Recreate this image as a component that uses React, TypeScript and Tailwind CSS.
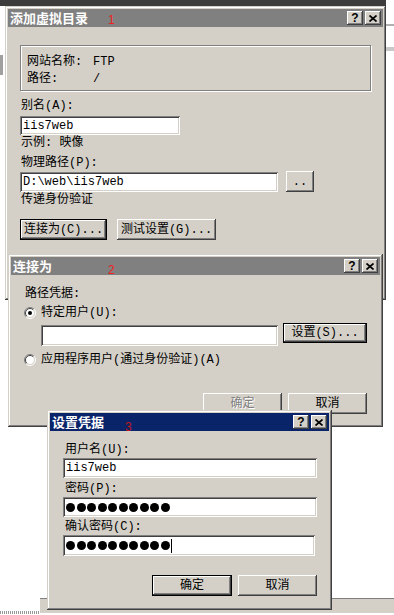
import React from 'react';

const raised =
  'shadow-[inset_-1px_-1px_#404040,inset_1px_1px_#ffffff,inset_-2px_-2px_#808080,inset_2px_2px_#d4d0c8]';
const sunken =
  'shadow-[inset_1px_1px_#808080,inset_-1px_-1px_#ffffff,inset_2px_2px_#404040,inset_-2px_-2px_#d4d0c8]';
const frame =
  'shadow-[inset_-1px_-1px_#404040,inset_1px_1px_#d4d0c8,inset_-2px_-2px_#808080,inset_2px_2px_#ffffff]';

function TitleBtn({ children }: { children: React.ReactNode }) {
  return (
    <div className={`w-[16px] h-[14px] bg-[#d4d0c8] ${raised} flex items-center justify-center`}>
      {children}
    </div>
  );
}

function Window({
  title,
  num,
  numCls,
  active,
  className,
  children,
}: {
  title: string;
  num: string;
  numCls: string;
  active?: boolean;
  className: string;
  children: React.ReactNode;
}) {
  return (
    <div className={`absolute bg-[#d4d0c8] p-[3px] ${frame} ${className}`}>
      <div className={`relative h-[18px] flex items-center px-[2px] ${active ? 'bg-[#0a246a]' : 'bg-[#808080]'}`}>
        <span className="text-white font-bold text-[13px] leading-[18px] [font-family:'Noto_Sans_CJK_SC',sans-serif]">
          {title}
        </span>
        <span className={`absolute text-[12px] leading-[12px] [font-family:'Liberation_Sans',sans-serif] ${numCls}`}>
          {num}
        </span>
        <div className="ml-auto flex gap-[2px]">
          <TitleBtn>
            <span className="font-bold text-[12px] leading-[12px] [font-family:'Liberation_Sans',sans-serif] -mt-[1px]">?</span>
          </TitleBtn>
          <TitleBtn>
            <svg width="8" height="7" viewBox="0 0 8 7">
              <path d="M0.5 0.5 L7.5 6.5 M7.5 0.5 L0.5 6.5" stroke="#000" strokeWidth="1.7" />
            </svg>
          </TitleBtn>
        </div>
      </div>
      {children}
    </div>
  );
}

function Btn({
  w,
  h = 21,
  def,
  disabled,
  children,
}: {
  w: string;
  h?: number;
  def?: boolean;
  disabled?: boolean;
  children: React.ReactNode;
}) {
  return (
    <div
      className={`${w} ${h === 20 ? 'h-[20px]' : 'h-[21px]'} bg-[#d4d0c8] flex items-center justify-center leading-[16px] ${
        def
          ? 'border border-black shadow-[inset_-1px_-1px_#404040,inset_1px_1px_#ffffff,inset_-2px_-2px_#808080]'
          : raised
      } ${disabled ? 'text-[#808080] [text-shadow:1px_1px_#ffffff]' : 'text-black'}`}
    >
      {children}
    </div>
  );
}

function Field({ w, h = 20, children }: { w: string; h?: number; children?: React.ReactNode }) {
  return (
    <div
      className={`${w} ${h === 19 ? 'h-[19px]' : h === 21 ? 'h-[21px]' : 'h-[20px]'} bg-white ${sunken} pl-[3px] flex items-center leading-[14px]`}
    >
      {children}
    </div>
  );
}

function Radio({ checked }: { checked?: boolean }) {
  return (
    <svg width="12" height="12" viewBox="0 0 12 12" className="shrink-0">
      <circle cx="6" cy="6" r="5" fill="#fff" />
      <path d="M2.1 9.9 A5.5 5.5 0 0 1 9.9 2.1" stroke="#808080" fill="none" />
      <path d="M9.9 2.1 A5.5 5.5 0 0 1 2.1 9.9" stroke="#ffffff" fill="none" />
      <path d="M2.8 9.2 A4.5 4.5 0 0 1 9.2 2.8" stroke="#404040" fill="none" />
      <path d="M9.2 2.8 A4.5 4.5 0 0 1 2.8 9.2" stroke="#d4d0c8" fill="none" />
      {checked && <circle cx="6" cy="6" r="2" fill="#000" />}
    </svg>
  );
}

function Dots({ n }: { n: number }) {
  return (
    <div className="flex gap-[1.5px]" aria-label="password">
      {Array.from({ length: n }).map((_, i) => (
        <div key={i} className="w-[9px] h-[9px] rounded-full bg-black" />
      ))}
    </div>
  );
}

export default function App() {
  return (
    <div className="relative w-[394px] h-[615px] overflow-hidden bg-white text-black text-[12px] [font-family:'Liberation_Mono','Noto_Sans_CJK_SC',monospace]">
      {/* desktop behind */}
      <div className="absolute left-0 top-0 w-[386px] h-[6px] bg-[#3c3c3c]" />
      <div className="absolute left-[386px] top-[24px] w-[8px] h-[2px] bg-[#b0b0b0]" />
      <div className="absolute left-[386px] top-[47px] w-[8px] h-[4px] bg-[#c8c8c8]" />
      <div className="absolute left-0 top-[55px] w-[3px] h-[20px] bg-[#a0a0a0]" />
      <div className="absolute left-[40px] top-[598px] w-[354px] h-[15px] bg-[#d4d0c8] border-t border-[#808080]" />
      <div className="absolute left-0 top-[611px] w-[40px] h-[3px] bg-[repeating-linear-gradient(90deg,#999_0_1px,#fff_1px_2px)]" />

      {/* 1 */}
      <Window
        className="left-[5px] top-[6px] w-[381px] h-[294px]"
        title="添加虚拟目录"
        num="1"
        numCls="left-[100px] top-[5px] text-[#f02020]"
      >
        <div className="px-[12px] flex flex-col">
          <div className="mt-[18px] h-[46px] border border-[#808080] shadow-[inset_1px_1px_#ffffff,1px_1px_#ffffff] pl-[6px] pt-[8px] leading-[17px]">
            <div className="flex">
              <span className="w-[66px]">网站名称:</span>
              <span>FTP</span>
            </div>
            <div className="flex">
              <span className="w-[66px]">路径:</span>
              <span>/</span>
            </div>
          </div>
          <div className="mt-[7px] leading-[16px] pl-[1px]">别名(A):</div>
          <div className="mt-[2px]">
            <Field w="w-[160px]" h={19}>iis7web</Field>
          </div>
          <div className="leading-[16px] pl-[1px]">示例: 映像</div>
          <div className="mt-[4px] leading-[16px] pl-[1px]">物理路径(P):</div>
          <div className="flex items-start gap-[8px]">
            <div className="mt-[1px]">
              <Field w="w-[258px]">D:\web\iis7web</Field>
            </div>
            <Btn w="w-[28px]">..</Btn>
          </div>
          <div className="leading-[16px] pl-[1px]">传递身份验证</div>
          <div className="mt-[11px] flex gap-[10px]">
            <Btn w="w-[87px]" def>
              连接为(C)...
            </Btn>
            <Btn w="w-[99px]">测试设置(G)...</Btn>
          </div>
        </div>
      </Window>

      {/* 2 */}
      <Window
        className="left-[8px] top-[254px] w-[375px] h-[173px]"
        title="连接为"
        num="2"
        numCls="left-[97px] top-[7px] text-[#f02020]"
      >
        <div className="pl-[13px] flex flex-col">
          <div className="mt-[11px] leading-[16px] pl-[1px]">路径凭据:</div>
          <div className="mt-[3px] flex items-center h-[16px]">
            <Radio checked />
            <span className="ml-[5px]">特定用户(U):</span>
          </div>
          <div className="mt-[2px] flex items-start pl-[17px] gap-[5px]">
            <div className="mt-[2px]">
              <Field w="w-[237px]" h={21} />
            </div>
            <Btn w="w-[84px]" h={20} def>
              设置(S)...
            </Btn>
          </div>
          <div className="mt-[6px] flex items-center h-[16px]">
            <Radio />
            <span className="ml-[5px]">应用程序用户(通过身份验证)(A)</span>
          </div>
          <div className="mt-[25px] flex justify-end gap-[6px] pr-[13px]">
            <Btn w="w-[79px]" disabled>
              确定
            </Btn>
            <Btn w="w-[79px]">取消</Btn>
          </div>
        </div>
      </Window>

      {/* 3 */}
      <Window
        className="left-[47px] top-[410px] w-[285px] h-[200px]"
        title="设置凭据"
        num="3"
        numCls="left-[75px] top-[8px] text-[#c01818]"
        active
      >
        <div className="pl-[13px] flex flex-col">
          <div className="mt-[11px] leading-[16px] pl-[2px]">用户名(U):</div>
          <Field w="w-[254px]">iis7web</Field>
          <div className="mt-[3px] leading-[16px] pl-[2px]">密码(P):</div>
          <Field w="w-[254px]">
            <Dots n={10} />
          </Field>
          <div className="mt-[2px] leading-[16px] pl-[2px]">确认密码(C):</div>
          <Field w="w-[252px]" h={21}>
            <Dots n={10} />
            <div className="ml-[1px] w-[1px] h-[14px] bg-black" />
          </Field>
          <div className="mt-[19px] flex justify-end gap-[6px] pr-[12px]">
            <Btn w="w-[80px]" def>
              确定
            </Btn>
            <Btn w="w-[79px]">取消</Btn>
          </div>
        </div>
      </Window>
    </div>
  );
}
